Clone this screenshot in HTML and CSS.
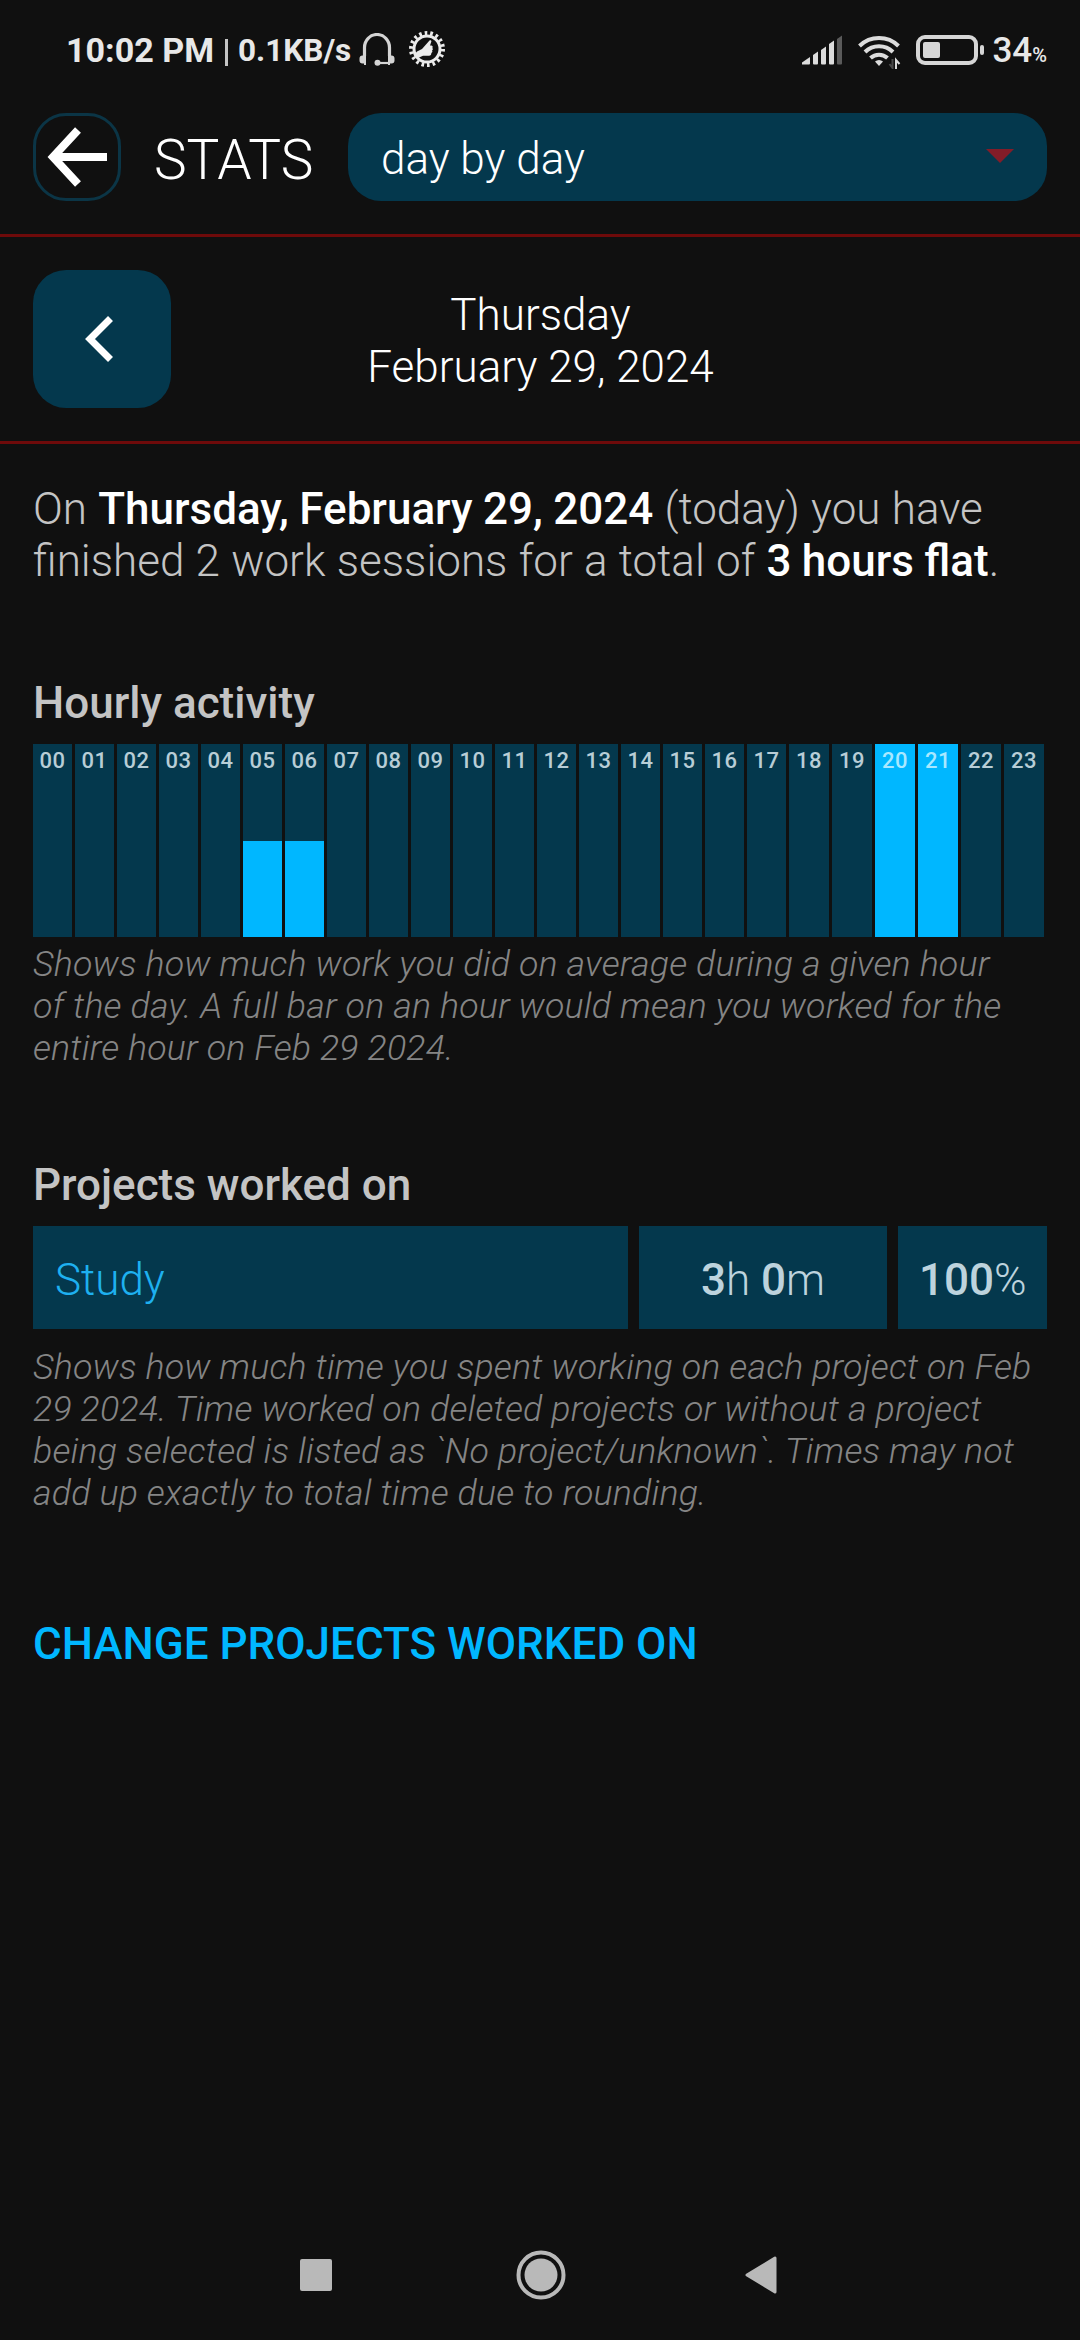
FILE: index.html
```html
<!DOCTYPE html>
<html lang="en">
<head>
  <meta charset="UTF-8">
  <meta name="viewport" content="width=device-width, initial-scale=1.0">
  <title>Stats</title>
  <link rel="stylesheet" href="styles.css">
</head>
<body>
<div class="status-bar">
  <span class="clock">10:02 PM</span>
  <span class="divider"></span>
  <span class="net-speed">0.1KB/s</span>
  <svg class="icon-headset" width="36" height="34" viewBox="0 0 36 34" fill="none" stroke="#d4d4d4">
    <path d="M5.500 23V14.500a12.500 13 0 0 1 25 0V23" stroke-width="3.200"/>
    <path d="M4 22.500h3v9.500H5v-1.500H3.500a3 3 0 0 1-3-3v-2a3 3 0 0 1 3-3zM29 22.500h3.500a3 3 0 0 1 3 3v2a3 3 0 0 1-3 3H31v1.500h-2z" fill="#d4d4d4" stroke="none"/>
    <path d="M18 30h13" stroke-width="2.200"/>
    <circle cx="18.500" cy="29.800" r="3" fill="#d4d4d4" stroke="none"/>
  </svg>
  <svg class="icon-gear" width="38" height="38" viewBox="0 0 38 38">
    <circle cx="19" cy="19" r="13" fill="none" stroke="#ebebeb" stroke-width="3"/>
    <circle cx="19" cy="19" r="16" fill="none" stroke="#ebebeb" stroke-width="4" stroke-dasharray="2.600 2.984"/>
    <path d="M6 25l3-3.500 5-2.500 7.500-8.500c1-.8 2.200 0 1.800 1.200L22 15.500h1.500c1.500.3 1.500 2 .7 2.600 1 .6.8 2-.2 2.500.8.800.3 2.200-.7 2.500.3 1.500-.8 2.700-2.300 2.700h-6L10 28z" fill="#ebebeb"/>
  </svg>
  <div class="status-right">
    <svg class="icon-signal" width="41" height="30" viewBox="0 0 41 30" fill="#dcdcdc">
      <path d="M0 29.500v-2L8 22v6.500a1 1 0 0 1-1 1z"/>
      <path d="M11 20l5-3.500v12a1 1 0 0 1-1 1h-3a1 1 0 0 1-1-1z"/>
      <path d="M19 15l5-3.500v17a1 1 0 0 1-1 1h-3a1 1 0 0 1-1-1z"/>
      <path d="M27 9l5-3.500v23a1 1 0 0 1-1 1h-3a1 1 0 0 1-1-1z"/>
      <path d="M35 4l5-3.500v28a1 1 0 0 1-1 1h-3a1 1 0 0 1-1-1z" fill="#5a5a5a"/>
    </svg>
    <svg class="icon-wifi" width="44" height="34" viewBox="0 0 44 34" fill="none" stroke="#dcdcdc" stroke-width="4">
      <path d="M1.500 11a28 28 0 0 1 39 0"/>
      <path d="M7 17a20 20 0 0 1 28 0"/>
      <path d="M12.500 23a12.500 12.500 0 0 1 17 0"/>
      <path d="M21 31l-4-4.500a6 6 0 0 1 8 0z" fill="#dcdcdc" stroke="none"/>
      <path d="M34.500 24v9l-3-4" stroke="#4a4a4a" stroke-width="2"/>
      <path d="M38 34v-9l3.500 4" stroke-width="2"/>
    </svg>
    <svg class="icon-battery" width="68" height="30" viewBox="0 0 68 30">
      <rect x="2" y="2" width="58" height="26" rx="7" fill="none" stroke="#d6d6d6" stroke-width="4"/>
      <rect x="7" y="7" width="17" height="16" rx="2" fill="#d6d6d6"/>
      <rect x="64" y="10" width="4" height="10" rx="2" fill="#d6d6d6"/>
    </svg>
    <span class="battery-level">34<small>%</small></span>
  </div>
</div>

<header class="topbar">
  <button class="back-btn">
    <svg width="60" height="60" viewBox="0 0 60 60" fill="none" stroke="#fff" stroke-width="8">
      <path d="M31 3L6 30l25 27M5.500 30H60"/>
    </svg>
  </button>
  <h1>STATS</h1>
  <div class="select">
    <span class="select-value">day by day</span>
    <svg class="caret" width="28" height="14" viewBox="0 0 28 14"><path d="M0 0h28L14 14z" fill="#831c28"/></svg>
  </div>
</header>

<nav class="date-nav">
  <button class="prev-btn">
    <svg width="28" height="46" viewBox="0 0 28 46" fill="none" stroke="#fff" stroke-width="7">
      <path d="M25.500 2.500L5 23l20.500 20.500"/>
    </svg>
  </button>
  <div class="date">Thursday<br>February 29, 2024</div>
</nav>

<main>
  <p class="summary">On <b>Thursday, February 29, 2024</b> (today) you have<br>finished 2 work sessions for a total of <b>3 hours flat</b>.</p>

  <section class="block">
    <h2>Hourly activity</h2>
    <div class="chart">
      <div class="bar"><span>00</span></div>
      <div class="bar"><span>01</span></div>
      <div class="bar"><span>02</span></div>
      <div class="bar"><span>03</span></div>
      <div class="bar"><span>04</span></div>
      <div class="bar half"><span>05</span></div>
      <div class="bar half"><span>06</span></div>
      <div class="bar"><span>07</span></div>
      <div class="bar"><span>08</span></div>
      <div class="bar"><span>09</span></div>
      <div class="bar"><span>10</span></div>
      <div class="bar"><span>11</span></div>
      <div class="bar"><span>12</span></div>
      <div class="bar"><span>13</span></div>
      <div class="bar"><span>14</span></div>
      <div class="bar"><span>15</span></div>
      <div class="bar"><span>16</span></div>
      <div class="bar"><span>17</span></div>
      <div class="bar"><span>18</span></div>
      <div class="bar"><span>19</span></div>
      <div class="bar full"><span>20</span></div>
      <div class="bar full"><span>21</span></div>
      <div class="bar"><span>22</span></div>
      <div class="bar"><span>23</span></div>
    </div>
    <p class="hint">Shows how much work you did on average during a given hour<br>of the day. A full bar on an hour would mean you worked for the<br>entire hour on Feb 29 2024.</p>
  </section>

  <section class="block">
    <h2>Projects worked on</h2>
    <div class="project">
      <div class="cell name">Study</div>
      <div class="cell time"><b>3</b>h <b>0</b>m</div>
      <div class="cell percent"><b>100</b>%</div>
    </div>
    <p class="hint project-hint">Shows how much time you spent working on each project on Feb<br>29 2024. Time worked on deleted projects or without a project<br>being selected is listed as `No project/unknown`. Times may not<br>add up exactly to total time due to rounding.</p>
  </section>

  <a class="change-link">CHANGE PROJECTS WORKED ON</a>
</main>

<footer class="system-nav">
  <svg width="32" height="32" viewBox="0 0 32 32"><rect width="32" height="32" rx="2" fill="#b9b9b9"/></svg>
  <svg class="home" width="50" height="50" viewBox="0 0 50 50">
    <circle cx="25" cy="25" r="22.500" fill="none" stroke="#b9b9b9" stroke-width="4"/>
    <circle cx="25" cy="25" r="16.500" fill="#b9b9b9"/>
  </svg>
  <svg width="32" height="38" viewBox="0 0 32 38">
    <path d="M2 19L30 2v34z" fill="#b9b9b9" stroke="#b9b9b9" stroke-width="3" stroke-linejoin="round"/>
  </svg>
</footer>
</body>
</html>
```
FILE: styles.css
```css
:root {
  --bg: #101010;
  --panel: #04384d;
  --accent: #00b7ff;
  --line: #6e0a0a;
  --text: #c4c4c4;
  --muted: #858585;
}

* {
  box-sizing: border-box;
  margin: 0;
  padding: 0;
}

body {
  height: 2340px;
  display: flex;
  flex-direction: column;
  background: var(--bg);
  color: var(--text);
  font-family: Roboto, sans-serif;
  font-size: 44px;
  font-weight: 300;
  overflow: hidden;
}

b {
  font-weight: 500;
}

svg {
  display: block;
  flex: none;
}

button {
  border: none;
  display: flex;
  align-items: center;
  justify-content: center;
  flex: none;
}

/* status bar */
.status-bar {
  height: 98px;
  padding: 2px 33px 0 66px;
  display: flex;
  align-items: center;
  color: #e8e8e8;
  font-weight: 700;
  white-space: nowrap;
}

.clock {
  width: 159px;
  font-size: 34.1px;
}

.divider {
  width: 3px;
  height: 27px;
  background: #c4c4c4;
  margin: 4px 10px 0 0;
}

.net-speed {
  width: 121px;
  font-size: 31.5px;
}

.icon-gear {
  margin: 0 0 2px 13px;
}

.status-right {
  margin-left: auto;
  display: flex;
  align-items: center;
}

.icon-wifi {
  margin: 3px 14px 0 15px;
}

.battery-level {
  margin-left: 8px;
  font-size: 35px;
  font-weight: 500;
}

.battery-level small {
  font-size: 20px;
}

/* header */
.topbar {
  height: 139px;
  padding: 15px 33px 33px;
  border-bottom: 3px solid var(--line);
  display: flex;
  align-items: center;
}

.back-btn {
  width: 88px;
  height: 88px;
  background: none;
  border: 3px solid #0b3546;
  border-radius: 33px;
}

h1 {
  width: 194px;
  margin-left: 33px;
  padding-top: 6px;
  font-size: 55px;
  font-weight: 300;
  color: #fff;
}

.select {
  flex: 1;
  height: 88px;
  padding: 0 33px;
  border-radius: 33px;
  background: var(--panel);
  color: #fff;
  display: flex;
  align-items: center;
  justify-content: space-between;
}

.select-value {
  padding-top: 4px;
}

.caret {
  margin-bottom: 2px;
}

/* date picker */
.date-nav {
  height: 207px;
  padding: 33px;
  border-bottom: 3px solid var(--line);
  display: flex;
  align-items: center;
}

.prev-btn {
  width: 138px;
  height: 138px;
  padding-right: 6px;
  border-radius: 33px;
  background: var(--panel);
}

.date {
  flex: 1;
  margin-right: 138px;
  padding: 4px 0 0 1px;
  text-align: center;
  color: #fff;
}

/* content */
main {
  flex: 1;
  padding: 39px 33px 0;
}

.summary {
  word-spacing: 0.5px;
}

.summary b {
  color: #fff;
  word-spacing: -0.6px;
}

.block {
  margin-top: 90px;
}

h2 {
  font-size: 44px;
  font-weight: 500;
  margin-bottom: 15px;
}

.chart {
  height: 193px;
  display: grid;
  grid-template-columns: repeat(18, 39px) repeat(6, 40px);
  gap: 3px;
}

.bar {
  padding-top: 4px;
  background: var(--panel);
  color: #b8cdd6;
  font-size: 22px;
  font-weight: 500;
  letter-spacing: 0.6px;
  text-align: center;
}

.bar.half {
  background: linear-gradient(to top, var(--accent) 96px, var(--panel) 96px);
}

.bar.full {
  background: var(--accent);
  color: #a8e8ff;
}

.hint {
  margin-top: 6px;
  margin-right: -20px;
  font-size: 35.75px;
  font-style: italic;
  letter-spacing: 0.17px;
  color: var(--muted);
  white-space: nowrap;
}

.project {
  display: flex;
  gap: 11px;
}

.cell {
  height: 103px;
  padding: 28px 22px 0;
  background: var(--panel);
  color: #bdd3dd;
}

.name {
  flex: 1;
  color: #1eb0f0;
}

.time {
  width: 248px;
  text-align: center;
}

.percent {
  width: 149px;
  padding: 28px 0 0 21px;
}

.project-hint {
  margin-top: 17px;
}

.change-link {
  display: block;
  margin-top: 104px;
  color: var(--accent);
  font-weight: 500;
}

/* android navigation */
.system-nav {
  height: 130px;
  padding-left: 300px;
  display: flex;
  align-items: center;
}

.home {
  margin: 0 179px 0 184px;
}
```
